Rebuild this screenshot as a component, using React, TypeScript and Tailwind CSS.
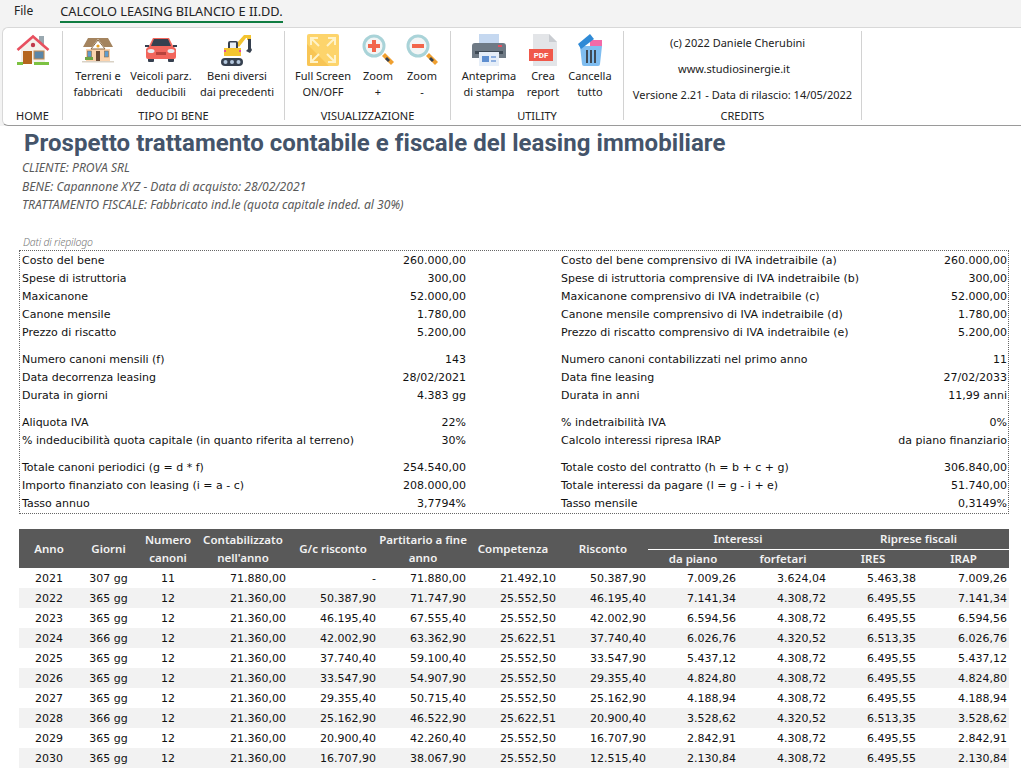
import type { ReactNode } from "react";

const House = () => (
  <svg width="34" height="32" viewBox="0 0 34 32">
    <rect x="23" y="2" width="5" height="11" fill="#9aa8b0" />
    <path d="M5 14 17 4l12 10v15H5z" fill="#f4f1ec" />
    <path d="M1.500 16 17 2.500 32.500 16" fill="none" stroke="#e8505f" strokeWidth="2.6" />
    <circle cx="17" cy="11" r="2.200" fill="#c0394b" />
    <rect x="7" y="17" width="9" height="13" fill="#b5651d" />
    <rect x="18" y="17" width="10" height="8" fill="#5b86a8" stroke="#c98a4b" />
    <rect x="1" y="28" width="6" height="3" fill="#7cc242" />
    <rect x="18" y="28" width="15" height="3" fill="#7cc242" />
  </svg>
);

const Cottage = () => (
  <svg width="32" height="26" viewBox="0 0 32 26">
    <path d="M4 12h24v12H4z" fill="#fbd3ae" />
    <path d="M1 10 6 1h20l5 9h-9L16 2l-6 8z" fill="#a4845f" />
    <path d="M16 3 9 12h14z" fill="#fff" stroke="#8b6b46" />
    <circle cx="16" cy="9" r="1.600" fill="#e8a020" />
    <rect x="14" y="14" width="4" height="10" fill="#6b4a34" />
    <rect x="5.500" y="14" width="4" height="6" fill="#5f9ccf" stroke="#8b6b46" strokeWidth=".6" />
    <rect x="22.500" y="14" width="4" height="6" fill="#5f9ccf" stroke="#8b6b46" strokeWidth=".6" />
    <rect x="3" y="20" width="8" height="3" fill="#6da544" />
    <rect x="0" y="24" width="32" height="1.500" fill="#d9d2c5" />
  </svg>
);

const Car = () => (
  <svg width="32" height="24" viewBox="0 0 32 24">
    <rect x="3" y="19" width="6" height="5" rx="1" fill="#36404f" />
    <rect x="23" y="19" width="6" height="5" rx="1" fill="#36404f" />
    <path d="M8 0h16l4 8 3 3v8q0 2-2 2H3q-2 0-2-2v-8l3-3z" fill="#f2665c" />
    <path d="M9 1h14l3 7H6z" fill="#36404f" />
    <path d="M0 7h4v2H0zM28 7h4v2h-4z" fill="#36404f" />
    <ellipse cx="6" cy="13" rx="3.500" ry="2" fill="#e9eef2" />
    <ellipse cx="26" cy="13" rx="3.500" ry="2" fill="#e9eef2" />
    <rect x="11" y="14" width="10" height="3" fill="#b8433c" />
  </svg>
);

const Excavator = () => (
  <svg width="32" height="32" viewBox="0 0 32 32">
    <path d="M15 10 23 1h7v5h-4V4h-1l-7 9z" fill="#f4c430" />
    <path d="M27 5h3v9l1 2-2 3-4-2 2-2z" fill="#36404f" />
    <path d="M7 9q0-2 2-2h6q2 0 2 2v6H7z" fill="#36404f" />
    <rect x="9" y="8.500" width="6" height="6" fill="#e6edf5" />
    <rect x="3" y="14" width="17" height="8" fill="#f4c430" />
    <rect x="3" y="16" width="2" height="2" fill="#e8508f" />
    <rect x="18" y="16" width="2" height="2" fill="#e8508f" />
    <rect x="0" y="24" width="22" height="8" rx="4" fill="#36404f" />
    <circle cx="4.500" cy="28" r="2" fill="#b4c7dd" />
    <circle cx="11" cy="28" r="2" fill="#b4c7dd" />
    <circle cx="17.500" cy="28" r="2" fill="#b4c7dd" />
  </svg>
);

const FullScreen = () => (
  <svg width="32" height="32" viewBox="0 0 32 32">
    <rect width="32" height="32" rx="2" fill="#fdd46b" />
    <path d="M0 10 22 32H2q-2 0-2-2z" fill="#f8c555" />
    <g fill="none" stroke="#fff3c8" strokeWidth="2">
      <path d="M4 11V4h7M4 4l8 8M28 11V4h-7M28 4l-8 8M4 21v7h7M4 28l8-8M28 21v7h-7M28 28l-8-8" />
    </g>
  </svg>
);

const Magnifier = ({ plus }: { plus?: boolean }) => (
  <svg width="32" height="32" viewBox="0 0 32 32">
    <path d="m20 22 3-3 9 9-3 3z" fill="#f0a030" />
    <path d="m23 25 2-2 3 3-2 2z" fill="#36404f" />
    <circle cx="12" cy="12" r="11.500" fill="#a9d3d8" />
    <circle cx="12" cy="12" r="8.500" fill="#f3f5f5" />
    <rect x="6" y="10" width="12" height="4" fill="#f2664b" />
    {plus && <rect x="10" y="6" width="4" height="12" fill="#f2664b" />}
  </svg>
);

const Printer = () => (
  <svg width="34" height="32" viewBox="0 0 34 32">
    <rect x="7" y="0" width="20" height="10" fill="#c5d8f0" />
    <path d="M3 9h28q3 0 3 3v12H0V12q0-3 3-3z" fill="#6f7a85" />
    <rect x="26" y="11" width="4" height="2" fill="#e8505f" />
    <rect x="3" y="17" width="28" height="3" fill="#3f4a55" />
    <rect x="7" y="18" width="20" height="14" fill="#e6eef8" />
    <rect x="10" y="22" width="7" height="6" fill="#5f8fd0" />
    <rect x="19" y="22" width="5" height="2" fill="#8fb0e0" />
    <rect x="19" y="26" width="5" height="2" fill="#8fb0e0" />
  </svg>
);

const Pdf = () => (
  <svg width="28" height="32" viewBox="0 0 28 32">
    <path d="M4 0h16l8 8v24H4z" fill="#e3e5e8" />
    <path d="M20 0v8h8z" fill="#c9ccd1" />
    <rect x="0" y="15" width="24" height="12" fill="#f0584a" />
    <text x="12" y="24" fontSize="8" fontWeight="700" fill="#fff" textAnchor="middle" fontFamily="Roboto, sans-serif">PDF</text>
  </svg>
);

const Bin = () => (
  <svg width="25" height="32" viewBox="0 0 25 32">
    <path d="M2 12h22l-2 18q0 2-2 2H6q-2 0-2-2z" fill="#7fbdf0" />
    <path d="M12 6h12v6H12z" fill="#f26aa8" />
    <path d="m0 10 12-10 4 5L3 15z" fill="#2f8ad6" />
    <rect x="8" y="16" width="2" height="13" fill="#3f4a55" />
    <rect x="12" y="16" width="2" height="13" fill="#3f4a55" />
    <rect x="16" y="16" width="2" height="13" fill="#3f4a55" />
  </svg>
);

const RibbonButton = ({ icon, lines, w }: { icon: ReactNode; lines: [string, string]; w: string }) => (
  <div className={`${w} flex flex-col items-center shrink-0`}>
    <div className="h-[37px] flex items-center justify-center">{icon}</div>
    <div className="text-center leading-[16px] whitespace-nowrap flex flex-col items-center">
      <span>{lines[0]}</span>
      <span>{lines[1]}</span>
    </div>
  </div>
);

const Group = ({ label, w, children, pl }: { label: string; w: string; pl?: string; children: ReactNode }) => (
  <div className={`${w} shrink-0 h-[89px] mt-[3px] border-r border-[#d2d2d2] flex flex-col`}>
    <div className={`flex h-[78px] shrink-0 ${pl ?? ""}`}>{children}</div>
    <div className="text-center leading-[14px] h-[14px] shrink-0">{label}</div>
  </div>
);

type Pair = [string, string];

const summary: { left: Pair; right: Pair }[][] = [
  [
    { left: ["Costo del bene", "260.000,00"], right: ["Costo del bene comprensivo di IVA indetraibile (a)", "260.000,00"] },
    { left: ["Spese di istruttoria", "300,00"], right: ["Spese di istruttoria comprensive di IVA indetraibile (b)", "300,00"] },
    { left: ["Maxicanone", "52.000,00"], right: ["Maxicanone comprensivo di IVA indetraibile (c)", "52.000,00"] },
    { left: ["Canone mensile", "1.780,00"], right: ["Canone mensile comprensivo di IVA indetraibile (d)", "1.780,00"] },
    { left: ["Prezzo di riscatto", "5.200,00"], right: ["Prezzo di riscatto comprensivo di IVA indetraibile (e)", "5.200,00"] },
  ],
  [
    { left: ["Numero canoni mensili (f)", "143"], right: ["Numero canoni contabilizzati nel primo anno", "11"] },
    { left: ["Data decorrenza leasing", "28/02/2021"], right: ["Data fine leasing", "27/02/2033"] },
    { left: ["Durata in giorni", "4.383 gg"], right: ["Durata in anni", "11,99 anni"] },
  ],
  [
    { left: ["Aliquota IVA", "22%"], right: ["% indetraibilità IVA", "0%"] },
    { left: ["% indeducibilità quota capitale (in quanto riferita al terreno)", "30%"], right: ["Calcolo interessi ripresa IRAP", "da piano finanziario"] },
  ],
  [
    { left: ["Totale canoni periodici (g = d * f)", "254.540,00"], right: ["Totale costo del contratto (h = b + c + g)", "306.840,00"] },
    { left: ["Importo finanziato con leasing (i = a - c)", "208.000,00"], right: ["Totale interessi da pagare (l = g - i + e)", "51.740,00"] },
    { left: ["Tasso annuo", "3,7794%"], right: ["Tasso mensile", "0,3149%"] },
  ],
];

const rows = [
  ["2021", "307 gg", "11", "71.880,00", "-", "71.880,00", "21.492,10", "50.387,90", "7.009,26", "3.624,04", "5.463,38", "7.009,26"],
  ["2022", "365 gg", "12", "21.360,00", "50.387,90", "71.747,90", "25.552,50", "46.195,40", "7.141,34", "4.308,72", "6.495,55", "7.141,34"],
  ["2023", "365 gg", "12", "21.360,00", "46.195,40", "67.555,40", "25.552,50", "42.002,90", "6.594,56", "4.308,72", "6.495,55", "6.594,56"],
  ["2024", "366 gg", "12", "21.360,00", "42.002,90", "63.362,90", "25.622,51", "37.740,40", "6.026,76", "4.320,52", "6.513,35", "6.026,76"],
  ["2025", "365 gg", "12", "21.360,00", "37.740,40", "59.100,40", "25.552,50", "33.547,90", "5.437,12", "4.308,72", "6.495,55", "5.437,12"],
  ["2026", "365 gg", "12", "21.360,00", "33.547,90", "54.907,90", "25.552,50", "29.355,40", "4.824,80", "4.308,72", "6.495,55", "4.824,80"],
  ["2027", "365 gg", "12", "21.360,00", "29.355,40", "50.715,40", "25.552,50", "25.162,90", "4.188,94", "4.308,72", "6.495,55", "4.188,94"],
  ["2028", "366 gg", "12", "21.360,00", "25.162,90", "46.522,90", "25.622,51", "20.900,40", "3.528,62", "4.320,52", "6.513,35", "3.528,62"],
  ["2029", "365 gg", "12", "21.360,00", "20.900,40", "42.260,40", "25.552,50", "16.707,90", "2.842,91", "4.308,72", "6.495,55", "2.842,91"],
  ["2030", "365 gg", "12", "21.360,00", "16.707,90", "38.067,90", "25.552,50", "12.515,40", "2.130,84", "4.308,72", "6.495,55", "2.130,84"],
];

const SummaryCell = ({ pair, w, pl }: { pair: Pair; w: string; pl: string }) => (
  <div className={`${w} ${pl} shrink-0 flex justify-between whitespace-nowrap`}>
    <span>{pair[0]}</span>
    <span>{pair[1]}</span>
  </div>
);

const th = "font-semibold text-center align-middle leading-[18px] p-0 font-['Noto_Sans',sans-serif] text-[11.5px] whitespace-nowrap";

export default function App() {
  return (
    <div className="h-screen w-full overflow-hidden bg-white text-[#111] font-['Noto_Sans',sans-serif] text-[11px]">
      <div className="bg-[#f3f3f3] h-[27px]">
        <div className="flex items-start pt-[3px] text-[#222]">
          <span className="ml-[14px] text-[12px] leading-[16px]">File</span>
          <span className="ml-[27px] border-b-2 border-[#107c41] h-[20px] text-[12.75px] leading-[16px]">CALCOLO LEASING BILANCIO E II.DD.</span>
        </div>
      </div>
      <div className="bg-[#f3f3f3]">
        <div className="ml-[2px] h-[99px] bg-white rounded-tl-[6px] rounded-bl-[6px] border border-r-0 border-[#d8d8d8] border-b-[#9a9a9a] flex text-[#222]">
          <Group label="HOME" w="w-[60px]">
            <RibbonButton w="w-full" icon={<House />} lines={["", ""]} />
          </Group>
          <Group label="TIPO DI BENE" w="w-[222px]" pl="pl-[7px]">
            <RibbonButton w="w-[56px]" icon={<Cottage />} lines={["Terreni e", "fabbricati"]} />
            <RibbonButton w="w-[70px]" icon={<Car />} lines={["Veicoli parz.", "deducibili"]} />
            <RibbonButton w="w-[82px]" icon={<Excavator />} lines={["Beni diversi", "dai precedenti"]} />
          </Group>
          <Group label="VISUALIZZAZIONE" w="w-[166px]" pl="pl-[5px]">
            <RibbonButton w="w-[66px]" icon={<FullScreen />} lines={["Full Screen", "ON/OFF"]} />
            <RibbonButton w="w-[44px]" icon={<Magnifier plus />} lines={["Zoom", "+"]} />
            <RibbonButton w="w-[44px]" icon={<Magnifier />} lines={["Zoom", "-"]} />
          </Group>
          <Group label="UTILITY" w="w-[173px]" pl="pl-[4px]">
            <RibbonButton w="w-[68px]" icon={<Printer />} lines={["Anteprima", "di stampa"]} />
            <RibbonButton w="w-[40px]" icon={<Pdf />} lines={["Crea", "report"]} />
            <RibbonButton w="w-[54px]" icon={<Bin />} lines={["Cancella", "tutto"]} />
          </Group>
          <Group label="CREDITS" w="w-[238px]">
            <div className="w-full flex flex-col items-center -mt-[1px] leading-[26px] whitespace-nowrap">
              <span className="pr-[10px]">(c) 2022 Daniele Cherubini</span>
              <span className="pr-[17px]">www.studiosinergie.it</span>
              <span>Versione 2.21 - Data di rilascio: 14/05/2022</span>
            </div>
          </Group>
        </div>
      </div>

      <div className="pl-[19px] pr-[12px]">
        <h1 className="ml-[5px] mt-[2px] font-['Roboto',sans-serif] font-bold text-[24px] leading-[30px] tracking-[0.05px] text-[#44546a] whitespace-nowrap">
          Prospetto trattamento contabile e fiscale del leasing immobiliare
        </h1>
        <div className="ml-[3px] mt-[1px] italic text-[#595959] leading-[18.5px] text-[12.1px]">
          <p>CLIENTE: PROVA SRL</p>
          <p>BENE: Capannone XYZ - Data di acquisto: 28/02/2021</p>
          <p>TRATTAMENTO FISCALE: Fabbricato ind.le (quota capitale inded. al 30%)</p>
        </div>
        <p className="ml-[4px] mt-[21.5px] italic font-light text-[10.5px] leading-[12px] text-[#777] tracking-[-0.2px]">Dati di riepilogo</p>
        <div className="mt-[2px] border border-dotted border-[#666] pt-[1px] pl-[2px] flex flex-col gap-[9px] font-['DejaVu_Sans',sans-serif] text-[11px] leading-[18px]">
          {summary.map((block, i) => (
            <div key={i}>
              {block.map((row) => (
                <div key={row.left[0]} className="flex">
                  <SummaryCell pair={row.left} w="w-[444px]" pl="" />
                  <SummaryCell pair={row.right} w="w-[541px]" pl="pl-[95px]" />
                </div>
              ))}
            </div>
          ))}
        </div>

        <table className="mt-[15px] w-[990px] table-fixed border-collapse font-['DejaVu_Sans',sans-serif] text-[11px]">
          <colgroup>
            <col className="w-[60px]" />
            <col className="w-[59px]" />
            <col className="w-[60px]" />
            <col className="w-[90px]" />
            <col className="w-[90px]" />
            <col className="w-[90px]" />
            <col className="w-[90px]" />
            <col className="w-[90px]" />
            <col className="w-[90px]" />
            <col className="w-[90px]" />
            <col className="w-[90px]" />
            <col className="w-[91px]" />
          </colgroup>
          <thead className="bg-[#595959] text-[#f2f2f2]">
            <tr className="h-[20px]">
              <th rowSpan={2} className={th}>Anno</th>
              <th rowSpan={2} className={th}>Giorni</th>
              <th rowSpan={2} className={th}>Numero<br />canoni</th>
              <th rowSpan={2} className={th}>Contabilizzato<br />nell'anno</th>
              <th rowSpan={2} className={th}>G/c risconto</th>
              <th rowSpan={2} className={th}>Partitario a fine<br />anno</th>
              <th rowSpan={2} className={th}>Competenza</th>
              <th rowSpan={2} className={th}>Risconto</th>
              <th colSpan={2} className={`${th} border-b border-white`}>Interessi</th>
              <th colSpan={2} className={`${th} border-b border-white`}>Riprese fiscali</th>
            </tr>
            <tr className="h-[19px]">
              <th className={th}>da piano</th>
              <th className={th}>forfetari</th>
              <th className={th}>IRES</th>
              <th className={th}>IRAP</th>
            </tr>
          </thead>
          <tbody>
            {rows.map((row, i) => (
              <tr key={row[0]} className={`h-[20px] ${i % 2 ? "bg-[#f2f2f2]" : ""}`}>
                {row.map((cell, j) => (
                  <td key={j} className={`p-0 pt-[1px] leading-[19px] ${j < 3 ? "text-center" : "text-right pr-[2px]"}`}>{cell}</td>
                ))}
              </tr>
            ))}
          </tbody>
        </table>
      </div>
    </div>
  );
}
